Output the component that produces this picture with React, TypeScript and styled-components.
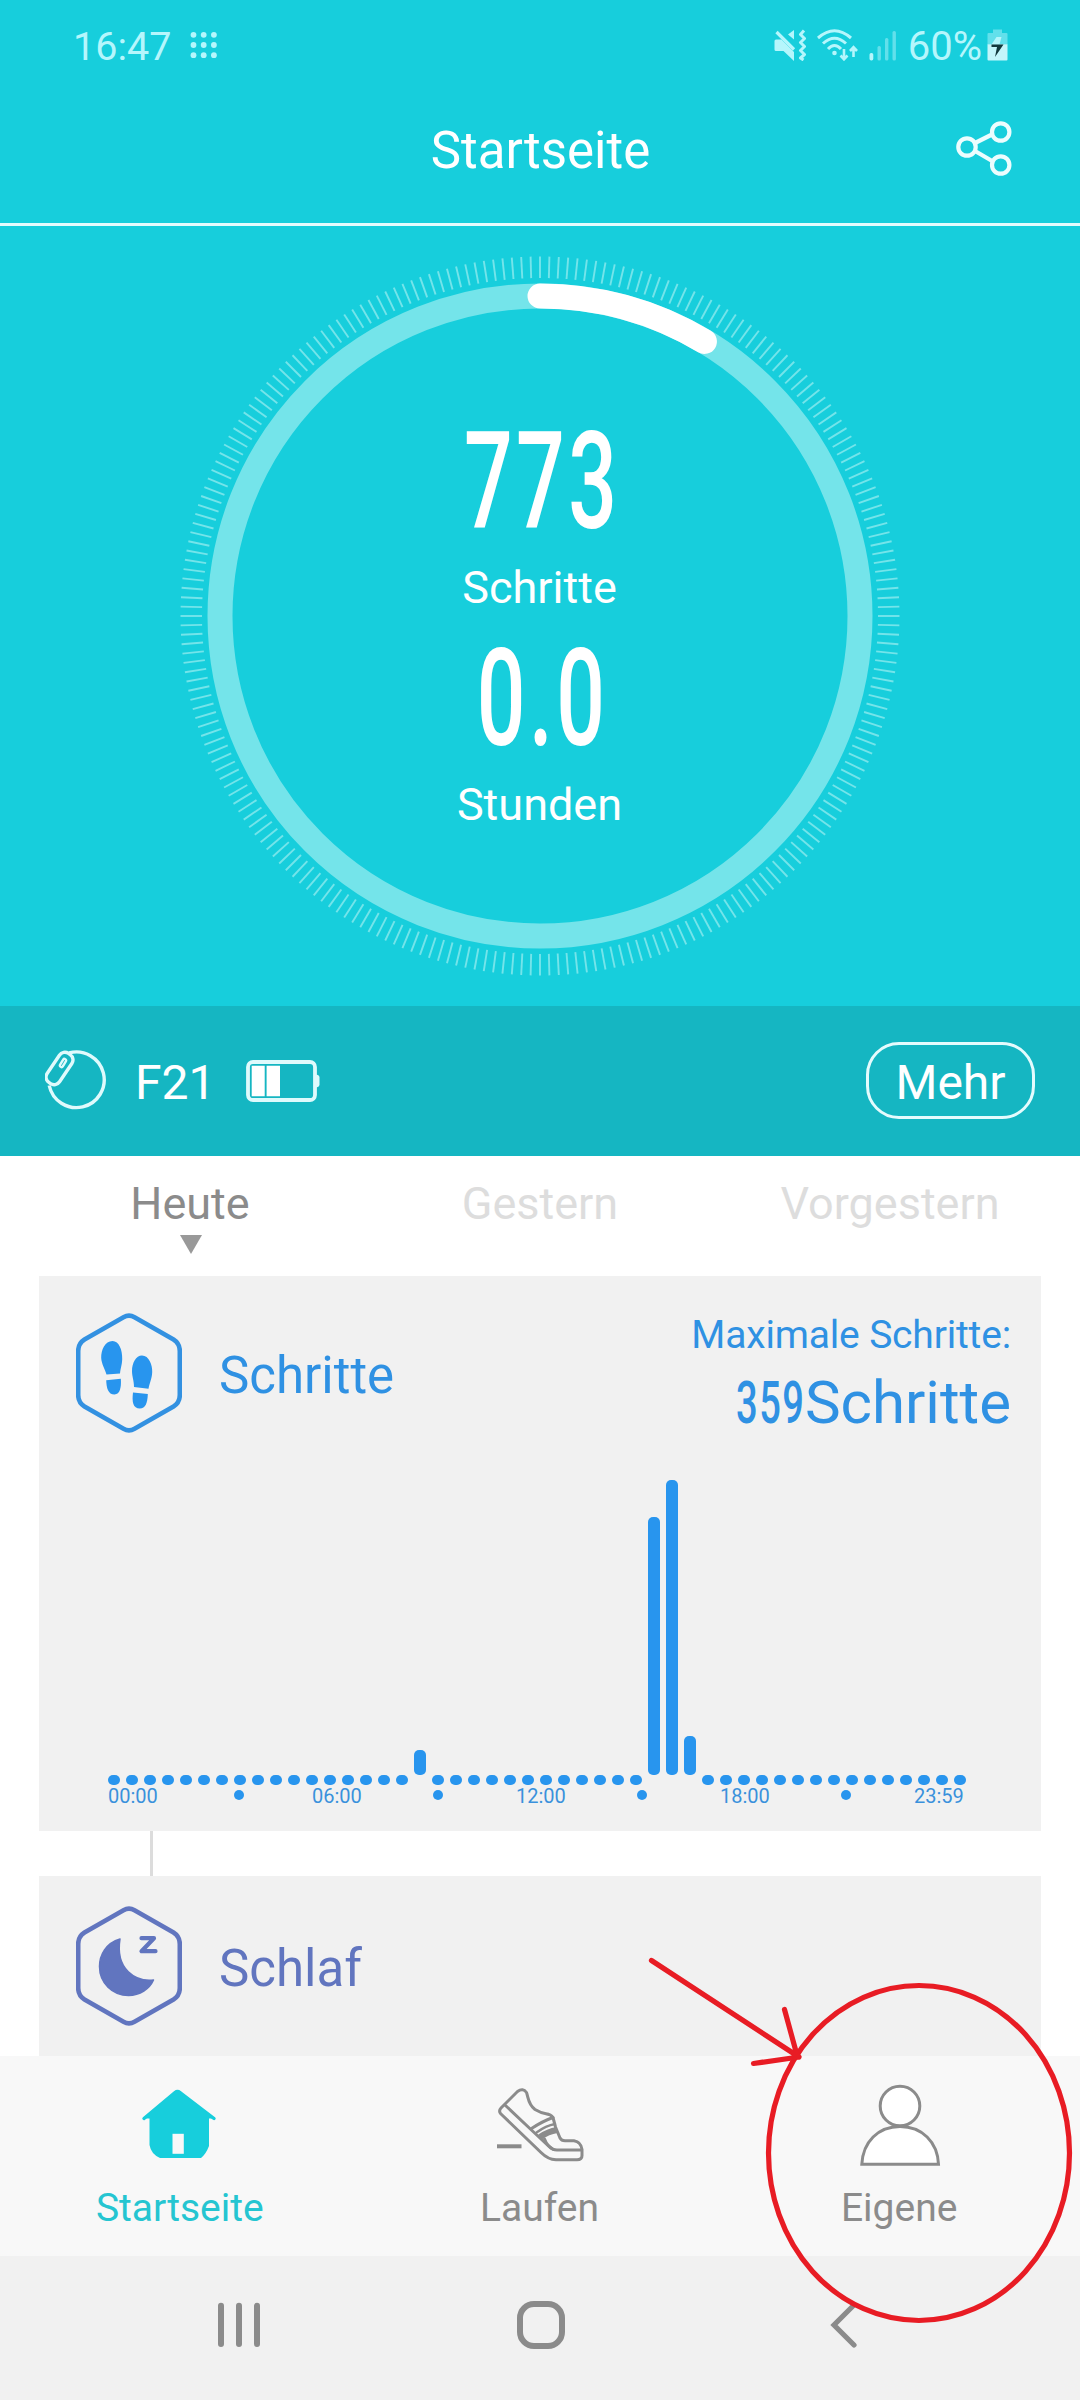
import React from "react";
import styled, { createGlobalStyle } from "styled-components";

const TEAL = "#17cedc";
const BLUE = "#2895ee";
const BLUE_TEXT = "#2f91e3";
const INDIGO = "#6175bf";
const GREY = "#8b8b8b";
const STATUS = "#b5f6fc";

const GlobalStyle = createGlobalStyle`
  * { box-sizing: border-box; }
  body {
    margin: 0;
    background: #ffffff;
    font-family: Roboto, "Liberation Sans", sans-serif;
  }
  svg { display: block; flex: none; }
`;

const Screen = styled.div`
  position: relative;
  width: 1080px;
  height: 2400px;
  display: flex;
  flex-direction: column;
  overflow: hidden;
  background: #ffffff;
`;

const StatusBar = styled.div`
  height: 78px;
  padding: 15px 72px 0 73px;
  display: flex;
  align-items: center;
  justify-content: space-between;
  background: ${TEAL};
  color: ${STATUS};
  font-size: 40px;
  line-height: 47px;
`;

const StatusGroup = styled.div<{ $gap: number }>`
  display: flex;
  align-items: center;
  gap: ${(p) => p.$gap}px;

  & > svg { margin-bottom: 3px; }
`;

const Clock = styled.span`
  font-size: 39.5px;
`;

const Header = styled.header`
  height: 148px;
  padding-right: 68px;
  display: grid;
  grid-template-columns: 1fr auto 1fr;
  align-items: center;
  background: ${TEAL};
  border-bottom: 3px solid #e4fbfd;
`;

const Title = styled.h1`
  grid-column: 2;
  margin: 0 0 0 69px;
  font-size: 51px;
  line-height: 60px;
  font-weight: 400;
  color: #ffffff;
`;

const ShareButton = styled.div`
  justify-self: end;
`;

const Hero = styled.section`
  height: 780px;
  display: grid;
  grid-template: 1fr / 1fr;
  justify-items: center;
  align-items: center;
  background: ${TEAL};

  & > * { grid-area: 1 / 1; }
`;

const Readout = styled.div`
  align-self: start;
  padding-top: 201px;
  display: flex;
  flex-direction: column;
  align-items: center;
  color: #ffffff;
`;

const NarrowBox = styled.span<{ $width: number; $size: number; $line: number }>`
  width: ${(p) => p.$width}px;
  height: ${(p) => p.$line}px;
  display: inline-flex;
  justify-content: center;
  font-size: ${(p) => p.$size}px;
  line-height: ${(p) => p.$line}px;
  font-weight: 500;
`;

const NarrowText = styled.span`
  flex: none;
  white-space: nowrap;
  letter-spacing: 0.04em;
  margin-right: -0.04em;
  transform: scaleX(0.635);
`;

const ReadoutLabel = styled.div<{ $after: number }>`
  margin: 24px 1px ${(p) => p.$after}px 0;
  font-size: 45px;
  line-height: 54px;
`;

const DeviceBar = styled.section`
  height: 150px;
  padding: 0 45px 0 45px;
  display: flex;
  align-items: center;
  background: #15b6c2;
  color: #ffffff;
`;

const DeviceName = styled.div`
  margin: 3px 31px 0 27px;
  font-size: 48px;
  line-height: 56px;
`;

const MoreButton = styled.div`
  width: 169px;
  height: 77px;
  margin: 0 0 2px auto;
  padding-top: 5px;
  display: flex;
  align-items: center;
  justify-content: center;
  border: 3px solid #e4fbfd;
  border-radius: 33px;
  font-size: 48px;
  line-height: 56px;
`;

const DayTabs = styled.nav`
  height: 120px;
  padding: 18px 15px 0;
  display: grid;
  grid-template-columns: repeat(3, 1fr);
`;

const DayTab = styled.div<{ $active?: boolean }>`
  display: flex;
  flex-direction: column;
  align-items: center;
  font-size: 45px;
  line-height: 60px;
  color: ${(p) => (p.$active ? GREY : "#dddddd")};
`;

const Marker = styled.div`
  margin: 1px 0 0 1px;
  border: 11px solid transparent;
  border-top: 19px solid #999999;
  border-bottom: 0;
`;

const Card = styled.article<{ $height?: number }>`
  margin: 0 39px;
  height: ${(p) => (p.$height ? `${p.$height}px` : "auto")};
  flex: ${(p) => (p.$height ? "none" : "1")};
  background: #f1f1f1;
`;

const CardHead = styled.div<{ $color: string; $top: number }>`
  padding: ${(p) => p.$top}px 30px 0 37px;
  display: flex;
  align-items: flex-start;
  color: ${(p) => p.$color};

  & > svg { margin-top: 1px; }
`;

const CardTitle = styled.h2`
  margin: 34px 0 0 37px;
  font-size: 51px;
  line-height: 60px;
  font-weight: 400;
`;

const Peak = styled.div`
  margin-left: auto;
  display: flex;
  flex-direction: column;
  align-items: flex-end;
`;

const PeakLabel = styled.div`
  font-size: 39px;
  line-height: 46px;
  letter-spacing: -0.17px;
`;

const PeakValue = styled.div`
  margin-top: 10px;
  height: 70px;
  display: flex;
  font-size: 60px;
  line-height: 70px;
`;

const Plot = styled.div`
  height: 305px;
  margin: 42px 69px 0;
  display: flex;
  align-items: flex-end;
  gap: 6px;
`;

const Bar = styled.div<{ $value: number }>`
  width: 12px;
  height: ${(p) => p.$value || 10}px;
  margin-bottom: ${(p) => (p.$value ? 10 : 0)}px;
  border-radius: 5px;
  background: ${BLUE};
`;

const Axis = styled.div`
  margin: 0 69px;
  height: 22px;
  display: flex;
  align-items: center;
  font-size: 20px;
  line-height: 22px;
  color: #3a91dc;
`;

const AxisLabel = styled.span<{ $gap: number }>`
  width: 50px;
  margin-left: ${(p) => p.$gap}px;
  flex: none;
`;

const AxisDot = styled.span<{ $gap: number }>`
  width: 10px;
  height: 10px;
  margin: 0 0 2px ${(p) => p.$gap}px;
  border-radius: 50%;
  background: ${BLUE};
`;

const Connector = styled.div`
  width: 3px;
  height: 45px;
  margin-left: 150px;
  background: #dcdcdc;
`;

const TabBar = styled.nav`
  height: 200px;
  padding: 30px 1px 0 0;
  display: grid;
  grid-template-columns: repeat(3, 1fr);
  background: #f8f8f8;
`;

const TabItem = styled.div<{ $active?: boolean }>`
  display: flex;
  flex-direction: column;
  align-items: center;
  gap: 19px;
  font-size: 39px;
  line-height: 46px;
  color: ${(p) => (p.$active ? "#25c5d1" : GREY)};

  & > svg {
    overflow: visible;
    margin-left: 1px;
  }
`;

const SystemBar = styled.nav`
  height: 144px;
  padding: 0 88px 6px;
  display: grid;
  grid-template-columns: repeat(3, 302px);
  justify-items: center;
  align-items: center;
  background: #f1f1f1;
`;

const Annotation = styled.svg`
  position: absolute;
  left: 640px;
  top: 1950px;
`;

const Narrow = ({ text, width, size, line }: { text: string; width: number; size: number; line: number }) => (
  <NarrowBox $width={width} $size={size} $line={line}>
    <NarrowText>{text}</NarrowText>
  </NarrowBox>
);

const GridDots = () => (
  <svg width="28" height="28" viewBox="0 0 28 28" fill={STATUS}>
    {[0, 1, 2].flatMap((r) =>
      [0, 1, 2].map((c) => <circle key={`${r}${c}`} cx={3.5 + c * 10.2} cy={3.8 + r * 10.2} r="2.9" />)
    )}
  </svg>
);

const MuteIcon = () => (
  <svg width="32" height="32" viewBox="0 0 32 32" fill={STATUS}>
    <path d="M2 10.5h5.5L20 23V32L9.5 22H2Q.5 22 .5 20.5V12Q.5 10.5 2 10.5Z" />
    <path d="M20 1v9.500L14 5.500Z" />
    <path d="M2.500 3L20 20.500" stroke={STATUS} strokeWidth="3.200" fill="none" />
    <path
      d="M30 1.500L26.500 5.500L30.500 9.500L26.500 13.500L30.500 17.500L26.500 21.500L30.500 25.500L26.500 29L29.500 31"
      stroke={STATUS}
      strokeWidth="3"
      strokeLinejoin="round"
      fill="none"
    />
  </svg>
);

const WifiIcon = () => (
  <svg width="41" height="32" viewBox="0 0 41 32" fill="none" stroke={STATUS} strokeWidth="3">
    <path d="M1 9Q17.500 -5.500 34 9" />
    <path d="M6 14.500Q17.500 4 29 14.500" />
    <path d="M11 20Q17.500 13 24 20" />
    <circle cx="17.500" cy="24" r="2.300" fill={STATUS} stroke="none" />
    <path d="M27 20v10M23.500 26.500L27 30.300L30.500 26.500" strokeWidth="2.600" />
    <path d="M36.500 28V18.500M33 22L36.500 18.200L40 22" strokeWidth="2.600" />
  </svg>
);

const SignalIcon = () => (
  <svg width="28" height="32" viewBox="0 0 28 32">
    <rect x="0.500" y="24" width="3.800" height="7.500" rx="1.700" fill={STATUS} />
    <g fill="#62e0eb">
      <rect x="8.500" y="17" width="3.400" height="14.500" rx="1.500" />
      <rect x="16" y="9" width="3.400" height="22.500" rx="1.500" />
      <rect x="23.500" y="2" width="3.400" height="29.500" rx="1.500" />
    </g>
  </svg>
);

const ChargeIcon = () => (
  <svg width="21" height="32" viewBox="0 0 21 32">
    <path d="M6 0.500h9v4H6z" fill="#62e0eb" />
    <path d="M0.500 5q0-1 1-1h18q1 0 1 1v10.500h-20z" fill="#62e0eb" />
    <path d="M0.500 15.300h20V30.500q0 1-1 1h-18q-1 0-1-1z" fill="#c4f5fa" />
    <path d="M9.500 8h5l-2 7.500h-8z" fill={STATUS} />
    <path d="M4.500 15.500h12L8 28L10 18H4.500z" fill="#12393d" />
  </svg>
);

const ShareIcon = () => (
  <svg width="56" height="60" viewBox="0 0 56 60" fill="none" stroke="#ecfdfe" strokeWidth="4.200">
    <path d="M19 22L37 13M19 30L37 40.500" />
    <circle cx="11" cy="26" r="8.700" />
    <circle cx="44.700" cy="11" r="8.700" />
    <circle cx="44.700" cy="44" r="8.700" />
  </svg>
);

const TICKS = Array.from({ length: 240 }, (_, i) => (i * 1.5 * Math.PI) / 180);
const PROGRESS = (773 / 9000) * 2 * Math.PI;

const Ring = () => (
  <svg width="722" height="722" viewBox="-361 -361 722 722" fill="none">
    <g stroke="#74e4ea" strokeWidth="1.900">
      {TICKS.map((a) => (
        <line
          key={a}
          x1={Math.sin(a) * 338}
          y1={-Math.cos(a) * 338}
          x2={Math.sin(a) * 359.5}
          y2={-Math.cos(a) * 359.5}
        />
      ))}
    </g>
    <circle r="320" stroke="#74e4ea" strokeWidth="25" />
    <path
      d={`M0 -320A320 320 0 0 1 ${Math.sin(PROGRESS) * 320} ${-Math.cos(PROGRESS) * 320}`}
      stroke="#ffffff"
      strokeWidth="25"
      strokeLinecap="round"
    />
  </svg>
);

const BandIcon = () => (
  <svg width="63" height="62" viewBox="0 0 63 62" fill="none" stroke="#dffafc" strokeWidth="3.400">
    <path d="M24 3A27.800 27.800 0 1 1 4.200 35.500" />
    <rect x="-7.500" y="-17.500" width="15" height="35" rx="6.500" transform="translate(14.500 18.500) rotate(34)" />
    <path d="M19.500 10.500L16.500 15.500" strokeWidth="5.500" strokeLinecap="round" />
    <path d="M19.500 10.500L16.500 15.500" stroke="#15b6c2" strokeWidth="0.900" strokeLinecap="round" />
  </svg>
);

const BatteryIcon = () => (
  <svg width="75" height="43" viewBox="0 0 75 43">
    <rect x="2" y="2" width="67" height="38" rx="5" fill="none" stroke="#dffafc" strokeWidth="3.800" />
    <path d="M69 14.500q4.500 0 4.500 3v7q0 3-4.500 3z" fill="#dffafc" />
    <path d="M5.700 5.800h13v30.500h-13zM20.600 5.800h13.400v30.500H20.600z" fill="#ffffff" />
  </svg>
);

const Hexagon = () => (
  <path
    d="M47.500 4.200Q53 1 58.500 4.200L97.500 26.500Q103.800 30.500 103.800 38V82Q103.800 89.500 97.500 93.500L58.500 115.800Q53 119 47.500 115.800L8.500 93.500Q2.200 89.500 2.200 82V38Q2.200 30.500 8.500 26.500Z"
    fill="none"
    strokeWidth="4.600"
  />
);

const StepsIcon = () => (
  <svg width="106" height="120" viewBox="0 0 106 120" fill={BLUE}>
    <g stroke="#3391e1">
      <Hexagon />
    </g>
    <path d="M36.500 28C43 28 46.500 37 46.200 46C46 52 44.800 54 44 60.500L30.500 61.500C29 56 25.500 51 25.200 45C25 37 29 28 36.500 28Z" />
    <path d="M30.200 67.200L44.800 65.800C45.500 74 44 81.500 38.500 81.500C32 81.500 30.500 75 30.200 67.200Z" />
    <path d="M66 42.500C73 42.500 76.500 52 76.200 59C76 66 73.500 70 72.500 75.800L58 74C58 67 56 64 56 58C56 50 60 42.500 66 42.500Z" />
    <path d="M57 79.500L71.800 81C71.500 90 69.500 95.500 63.800 95.500C57 95.500 55.800 89 57 79.500Z" />
  </svg>
);

const SleepIcon = () => (
  <svg width="106" height="120" viewBox="0 0 106 120" fill={INDIGO} stroke={INDIGO}>
    <Hexagon />
    <path
      d="M44 33C30 37 23.500 49 23.500 60.500C23.500 77 36.500 89.500 52.500 89.500C64 89.500 73.500 83 77.500 74C60 76 39 64 44 33Z"
      strokeWidth="1.500"
      strokeLinejoin="round"
    />
    <path
      d="M65.500 32.200H78L65.500 45.200H79.500"
      fill="none"
      strokeWidth="4.200"
      strokeLinecap="round"
      strokeLinejoin="round"
    />
  </svg>
);

const HomeIcon = () => (
  <svg width="88" height="80" viewBox="0 0 88 80" fill={TEAL}>
    <path
      d="M8 32.500L39 6.500Q41.500 4.500 44 6.500L78 32.500"
      stroke={TEAL}
      strokeWidth="3.400"
      strokeLinecap="round"
    />
    <path d="M13.500 27L42 5L73 28V60Q70 68 65 72H24Q15 68 13.500 59Z" />
    <path d="M36.500 47.800h11.300v20H36.500z" fill="#f8f8f8" />
  </svg>
);

const ShoeIcon = () => (
  <svg
    width="88"
    height="80"
    viewBox="0 0 88 80"
    fill="none"
    stroke={GREY}
    strokeWidth="3"
    strokeLinejoin="round"
    strokeLinecap="round"
  >
    <path d="M5 22L21.500 5.500Q27 1.500 30.500 6.500C32.500 12 32 18 39 23.500Q45 27 50 27.800Q55 28.500 57 31.500L59.500 41L64 52Q65.500 54.800 69 54.800H78Q85 56 86 63.500V69.500Q86 73.800 81 73.800H60Q52 73.500 45 66.500L4.500 27.500Q2.500 24.500 5 22Z" />
    <path d="M9.500 19.500L36.500 45L53 60.500Q56.500 64 61 64H85.500" />
    <path d="M35.500 42.500Q47 35 57 31.500" />
    <path d="M40.500 46.500Q50 39.500 59 38" strokeWidth="2.400" />
    <path d="M44 51Q52 45.500 61 44" strokeWidth="6" strokeLinecap="butt" />
    <path d="M48.500 53Q51 60 57.500 63.500" />
    <path d="M1 60.300h24.500" strokeWidth="4" strokeLinecap="butt" />
  </svg>
);

const PersonIcon = () => (
  <svg width="88" height="80" viewBox="0 0 88 80" fill="#ffffff" stroke={GREY} strokeWidth="3">
    <circle cx="44" cy="20" r="19.800" />
    <path d="M5.800 78.300C7 56 22 40.500 44 40.500S81.500 56 82.500 78.300Z" />
  </svg>
);

const RecentsIcon = () => (
  <svg width="44" height="46" viewBox="0 0 44 46" stroke={GREY} strokeWidth="6" strokeLinecap="round">
    <path d="M4 3.800V42M22 3.800V42M40 3.800V42" />
  </svg>
);

const HomeKeyIcon = () => (
  <svg width="48" height="48" viewBox="0 0 48 48" fill="none" stroke={GREY} strokeWidth="6">
    <rect x="3" y="3" width="42" height="42" rx="14" />
  </svg>
);

const BackIcon = () => (
  <svg width="28" height="46" viewBox="0 0 28 46" fill="none" stroke={GREY} strokeWidth="5.200" strokeLinecap="round">
    <path d="M25 3L5 23L25 43" />
  </svg>
);

const STEPS: Record<number, number> = { 17: 25, 30: 258, 31: 295, 32: 39 };
const SLOTS = Array.from({ length: 48 }, (_, i) => STEPS[i] ?? 0);

export default function App() {
  return (
    <>
      <GlobalStyle />
      <Screen>
        <StatusBar>
          <StatusGroup $gap={19}>
            <Clock>16:47</Clock>
            <GridDots />
          </StatusGroup>
          <StatusGroup $gap={11}>
            <MuteIcon />
            <WifiIcon />
            <SignalIcon />
            <StatusGroup $gap={5}>
              <span>60%</span>
              <ChargeIcon />
            </StatusGroup>
          </StatusGroup>
        </StatusBar>
        <Header>
          <Title>Startseite</Title>
          <ShareButton>
            <ShareIcon />
          </ShareButton>
        </Header>
        <Hero>
          <Ring />
          <Readout>
            <Narrow text="773" width={152} size={135} line={110} />
            <ReadoutLabel $after={29}>Schritte</ReadoutLabel>
            <Narrow text="0.0" width={152} size={135} line={110} />
            <ReadoutLabel $after={0}>Stunden</ReadoutLabel>
          </Readout>
        </Hero>
        <DeviceBar>
          <BandIcon />
          <DeviceName>F21</DeviceName>
          <BatteryIcon />
          <MoreButton>Mehr</MoreButton>
        </DeviceBar>
        <DayTabs>
          <DayTab $active>
            Heute
            <Marker />
          </DayTab>
          <DayTab>Gestern</DayTab>
          <DayTab>Vorgestern</DayTab>
        </DayTabs>
        <Card $height={555}>
          <CardHead $color={BLUE_TEXT} $top={36}>
            <StepsIcon />
            <CardTitle>Schritte</CardTitle>
            <Peak>
              <PeakLabel>Maximale Schritte:</PeakLabel>
              <PeakValue>
                <Narrow text="359" width={71} size={60} line={70} />
                Schritte
              </PeakValue>
            </Peak>
          </CardHead>
          <Plot>
            {SLOTS.map((value, i) => (
              <Bar key={i} $value={value} />
            ))}
          </Plot>
          <Axis>
            <AxisLabel $gap={0}>00:00</AxisLabel>
            <AxisDot $gap={76} />
            <AxisLabel $gap={68}>06:00</AxisLabel>
            <AxisDot $gap={71} />
            <AxisLabel $gap={73}>12:00</AxisLabel>
            <AxisDot $gap={71} />
            <AxisLabel $gap={73}>18:00</AxisLabel>
            <AxisDot $gap={71} />
            <AxisLabel $gap={63}>23:59</AxisLabel>
          </Axis>
        </Card>
        <Connector />
        <Card>
          <CardHead $color={INDIGO} $top={29}>
            <SleepIcon />
            <CardTitle>Schlaf</CardTitle>
          </CardHead>
        </Card>
        <TabBar>
          <TabItem $active>
            <HomeIcon />
            Startseite
          </TabItem>
          <TabItem>
            <ShoeIcon />
            Laufen
          </TabItem>
          <TabItem>
            <PersonIcon />
            Eigene
          </TabItem>
        </TabBar>
        <SystemBar>
          <RecentsIcon />
          <HomeKeyIcon />
          <BackIcon />
        </SystemBar>
        <Annotation
          width="440"
          height="380"
          viewBox="640 1950 440 380"
          fill="none"
          stroke="#e81c24"
          strokeWidth="5.200"
          strokeLinecap="round"
        >
          <ellipse cx="919" cy="2153" rx="150.500" ry="167.500" />
          <path d="M651.500 1960.500L799 2057M784.500 2009.500L797.500 2057M753.500 2063.500L799 2057" />
        </Annotation>
      </Screen>
    </>
  );
}
